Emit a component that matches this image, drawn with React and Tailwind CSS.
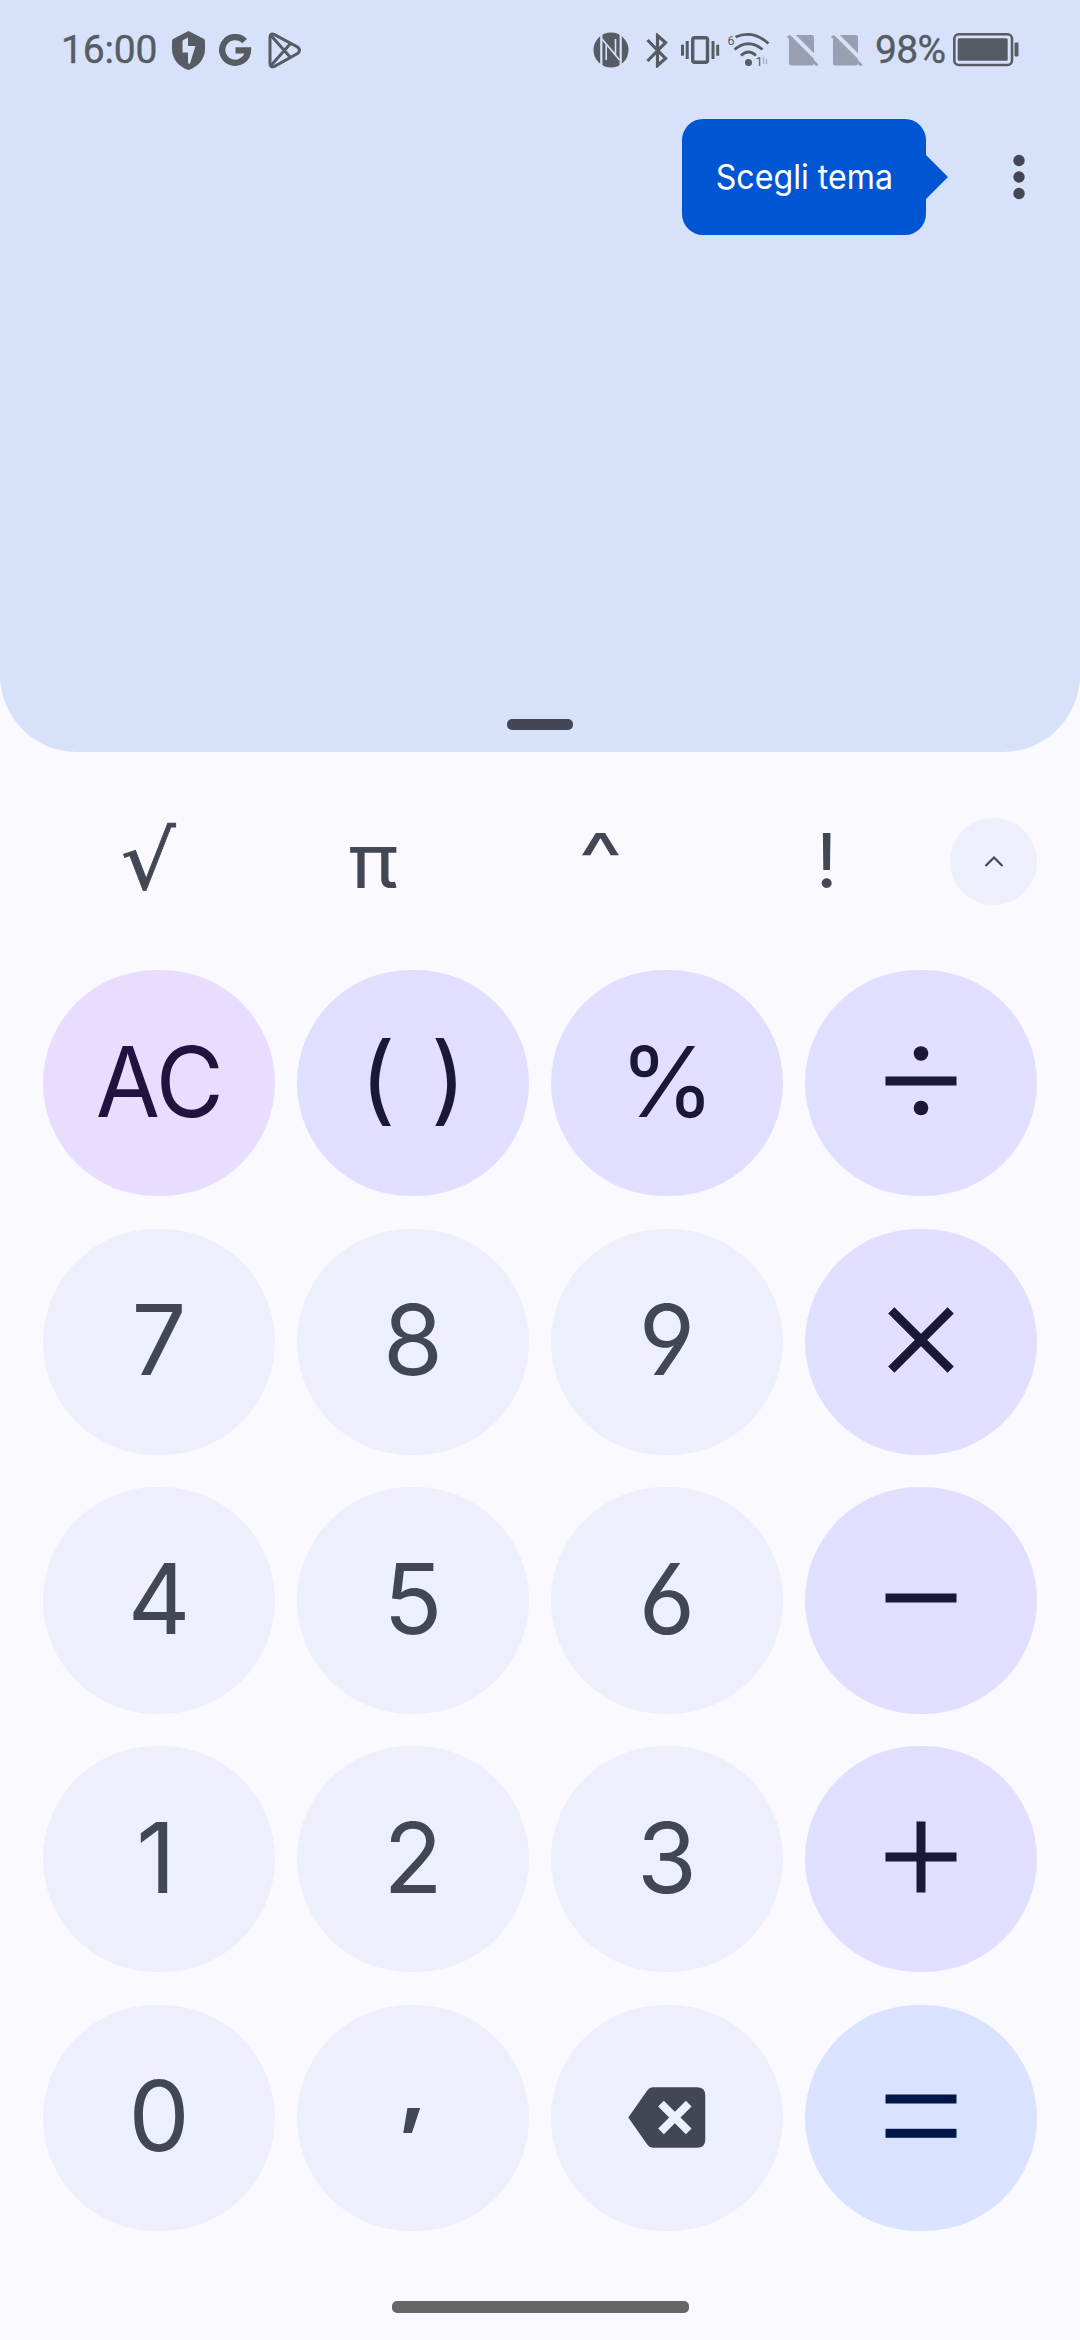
const digit = "bg-[#edeffc] text-[#434654]";
const operator = "bg-[#e0dfff] text-[#191937]";

function Divide() {
  return (
    <svg width="72" height="72" viewBox="0 0 72 72" fill="currentColor">
      <circle cx="36" cy="8.5" r="7.3" />
      <rect x="0.5" y="31.5" width="71" height="9" />
      <circle cx="36" cy="63" r="7.3" />
    </svg>
  );
}

function Multiply() {
  return (
    <svg width="72" height="72" viewBox="0 0 72 72" fill="none" stroke="currentColor" strokeWidth="8.8">
      <path d="M6.3 6.3L65.7 65.7M65.7 6.3L6.3 65.7" />
    </svg>
  );
}

function Minus() {
  return (
    <svg width="72" height="72" viewBox="0 0 72 72" fill="currentColor">
      <rect x="0.5" y="31.5" width="71" height="9" />
    </svg>
  );
}

function Plus() {
  return (
    <svg width="72" height="72" viewBox="0 0 72 72" fill="currentColor">
      <rect x="0.5" y="31.5" width="71" height="9" />
      <rect x="31.5" y="0.5" width="9" height="71" />
    </svg>
  );
}

function Equals() {
  return (
    <svg width="72" height="72" viewBox="0 0 72 72" fill="currentColor">
      <rect x="0.5" y="14.5" width="71" height="9" />
      <rect x="0.5" y="48.8" width="71" height="9" />
    </svg>
  );
}

function Backspace() {
  return (
    <svg width="78" height="61" viewBox="0 0 78 61" className="mt-1">
      <path
        d="M25 0.3H69q8.3 0 8.3 8.3V52.4q0 8.3-8.3 8.3H25q-3.5 0-5.6-3L0.3 30.5L19.4 3.3Q21.5 0.3 25 0.3Z"
        fill="currentColor"
      />
      <path d="M33 16.7L60.7 44.3M60.7 16.7L33 44.3" stroke="#edeffc" strokeWidth="8" />
    </svg>
  );
}

const keys = [
  { label: "AC", color: "bg-[#e8ddff] text-[#21123f]" },
  { label: "( )", color: operator },
  { label: "%", color: operator },
  { icon: Divide, name: "divide", color: operator },
  { label: "7", color: digit },
  { label: "8", color: digit },
  { label: "9", color: digit },
  { icon: Multiply, name: "multiply", color: operator },
  { label: "4", color: digit },
  { label: "5", color: digit },
  { label: "6", color: digit },
  { icon: Minus, name: "minus", color: operator },
  { label: "1", color: digit },
  { label: "2", color: digit },
  { label: "3", color: digit },
  { icon: Plus, name: "plus", color: operator },
  { label: "0", color: digit },
  { label: ",", color: digit },
  { icon: Backspace, name: "backspace", color: digit },
  { icon: Equals, name: "equals", color: "bg-[#d9e2ff] text-[#001847]" },
];

const labelStyle = {
  AC: "tracking-[-1px] scale-x-[0.96]",
  "( )": "[word-spacing:8px] -translate-y-[4px]",
  1: "-translate-x-[3px]",
  ",": "font-semibold -translate-y-[30px] scale-y-[0.88]",
};

function NoSim({ className }) {
  return (
    <svg width="32" height="31" viewBox="0 0 32 31" className={className}>
      <rect x="2" y="0" width="25" height="30.5" rx="2.5" fill="#979fb1" />
      <path d="M4 -2L33 27" stroke="#d7e2fa" strokeWidth="4" />
      <path d="M1 1L30.5 30.5" stroke="#979fb1" strokeWidth="2.8" />
    </svg>
  );
}

function StatusBar() {
  return (
    <div className="flex h-[100px] items-center pl-[61px] pr-[60px] font-['Roboto',sans-serif] text-[39px] font-[450] leading-none text-[#565b64]">
      <span className="w-[111px] tracking-[-0.2px] [-webkit-text-stroke:0.4px_#565b64]">16:00</span>
      <svg width="33" height="39" viewBox="0 0 33 39">
        <path d="M16.5 0L32 8Q33 8.5 33 10.5V18C33 28 26 36 16.5 39C7 36 0 28 0 18V10.5Q0 8.5 1 8Z" fill="currentColor" />
        <path d="M10.5 9.5L16 6.5V15H23.5L18 32.5H16V21.5H10.5Z" fill="#d7e2fa" />
      </svg>
      <svg width="33" height="33" viewBox="0 0 33 33" className="ml-[14px]" fill="none" stroke="currentColor" strokeWidth="6.3">
        <path d="M25.6 7.2A12.9 12.9 0 1 0 29 16.3H16.5" />
      </svg>
      <svg width="34" height="37" viewBox="0 0 34 37" className="ml-[16px]" fill="none" stroke="currentColor" strokeWidth="3">
        <path d="M2 5.5Q2 0.5 6.5 2.7L29.5 15Q33.5 18.3 29.5 21.5L6.5 34.3Q2 36 2 31.5Z" />
        <path d="M3 3.5L22.5 25.5M3 33.5L22.5 11.5" />
      </svg>
      <div className="ml-auto flex items-center">
        <svg width="36" height="36" viewBox="0 0 36 36">
          <circle cx="18" cy="18" r="17.5" fill="currentColor" />
          <path d="M8.3 0V36M27.7 0V36" stroke="#d7e2fa" strokeWidth="2.2" />
          <path d="M13.2 28V12L26.5 28M9 7L22.5 23V7" fill="none" stroke="#d7e2fa" strokeWidth="1.6" />
        </svg>
        <svg width="23" height="35" viewBox="0 0 23 35" className="ml-[17px]" fill="none" stroke="currentColor" strokeWidth="3.2">
          <path d="M1.5 7L19.5 25.5L11.5 32.5V2.5L19.5 9.5L1.5 28" />
        </svg>
        <svg width="39" height="28" viewBox="0 0 39 28" className="ml-[12px]" fill="currentColor">
          <rect x="11.7" y="1.7" width="14.8" height="24.6" rx="2" fill="none" stroke="currentColor" strokeWidth="3.4" />
          <rect x="0" y="8.7" width="3" height="11" />
          <rect x="4.7" y="5" width="3" height="18" />
          <rect x="30.5" y="5" width="3" height="18" />
          <rect x="35.2" y="8.7" width="3" height="11" />
        </svg>
        <svg width="42" height="36" viewBox="0 0 42 36" className="ml-[8px]" fill="none" stroke="currentColor" strokeWidth="2.8">
          <path d="M7.5 5Q25 -2.5 40.5 11.5" />
          <path d="M6.5 17.5Q20.5 6 34.5 17.5" />
          <path d="M13 23.5Q20.5 16.5 28 23.5" />
          <circle cx="20.5" cy="30.5" r="3.5" fill="currentColor" stroke="none" />
          <path d="M35.5 25V32M38.5 27V32" stroke="#a9b2c6" strokeWidth="1.4" />
          <text x="-0.5" y="12.7" fontSize="12.5" fill="currentColor" stroke="none">6</text>
          <text x="27.5" y="33.5" fontSize="13" fill="currentColor" stroke="none">1</text>
        </svg>
        <NoSim className="ml-[17px]" />
        <NoSim className="ml-[12px]" />
        <span className="ml-[12px] w-[75px] tracking-[-0.7px] [-webkit-text-stroke:0.4px_#565b64]">98%</span>
        <svg width="67" height="34" viewBox="0 0 67 34" className="ml-[3px]" fill="currentColor">
          <rect x="1.3" y="1.3" width="57.7" height="30.7" rx="4.5" fill="none" stroke="currentColor" strokeWidth="2.6" />
          <rect x="4.7" y="5.3" width="50" height="22.5" rx="1.5" />
          <rect x="61.5" y="9.5" width="4" height="14" rx="1" />
        </svg>
      </div>
    </div>
  );
}

function Display() {
  return (
    <div className="flex h-[752px] flex-col rounded-b-[77px] bg-[#d7e2fa]">
      <StatusBar />
      <div className="mt-[19px] flex items-center justify-end pr-[55px]">
        <div className="flex h-[116px] w-[244px] items-center justify-center rounded-[21px] bg-[#0056d2] pt-[2px] font-['Inter',sans-serif] text-[33.5px] leading-none text-white">
          <span className="scale-x-[0.96] whitespace-nowrap">Scegli tema</span>
        </div>
        <svg width="22" height="44" viewBox="0 0 22 44">
          <path d="M0 0L22 22L0 44Z" fill="#0056d2" />
        </svg>
        <svg width="12" height="46" viewBox="0 0 12 46" className="ml-[65px]" fill="#434654">
          <circle cx="6" cy="6.5" r="5.7" />
          <circle cx="6" cy="23" r="5.7" />
          <circle cx="6" cy="39.5" r="5.7" />
        </svg>
      </div>
      <div className="mx-auto mb-[22px] mt-auto h-[11px] w-[66px] rounded-[5px] bg-[#434654]" />
    </div>
  );
}

function FunctionRow() {
  return (
    <div className="flex h-[218px] items-center pl-[33px] pr-[43px] font-['Inter',sans-serif] text-[76px] leading-none text-[#434654]">
      <div className="grid w-[907px] grid-cols-4 items-center pb-[3px] text-center">
        <span className="translate-x-[2px] translate-y-[2px] scale-x-[1.06] font-['DejaVu_Sans',sans-serif] text-[81px] [-webkit-text-stroke:0.8px_#434654]">√</span>
        <span className="scale-x-[1.08]">π</span>
        <span className="-translate-y-px origin-top scale-x-[1.24] scale-y-[0.95]">^</span>
        <span>!</span>
      </div>
      <div className="ml-[10px] flex h-[87px] w-[87px] items-center justify-center rounded-full bg-[#edeffc]">
        <svg width="20" height="12" viewBox="0 0 20 12" fill="none" stroke="#434654" strokeWidth="2.2">
          <path d="M1.5 11L10 2.5L18.5 11" />
        </svg>
      </div>
    </div>
  );
}

export default function App() {
  return (
    <div className="flex h-[2340px] w-[1080px] flex-col overflow-hidden bg-[#f9f9ff]">
      <Display />
      <FunctionRow />
      <div className="mx-[43px] grid h-[1261px] grid-cols-4 grid-rows-5 gap-x-[22px] gap-y-[32.5px]">
        {keys.map(({ label, icon: Icon, name, color }) => (
          <button
            key={label || name}
            aria-label={label || name}
            className={`flex items-center justify-center rounded-full pb-[4px] font-['Inter',sans-serif] text-[97px] leading-none [font-feature-settings:'cv03','cv04'] ${color}`}
          >
            {Icon ? <Icon /> : <span className={labelStyle[label]}>{label}</span>}
          </button>
        ))}
      </div>
      <div className="mx-auto mt-[70px] h-[12px] w-[297px] rounded-[5px] bg-[#666667]" />
    </div>
  );
}
